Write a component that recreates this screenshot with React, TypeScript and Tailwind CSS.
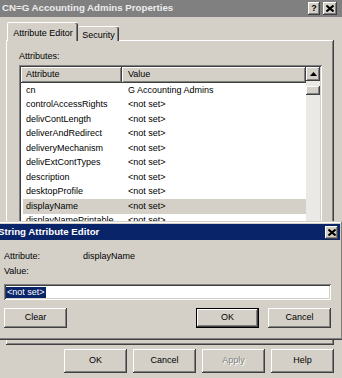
const raised =
  "shadow-[inset_-1px_-1px_#404040,inset_1px_1px_#ffffff,inset_-2px_-2px_#808080,inset_2px_2px_#d4d0c8]";
const sunken =
  "shadow-[inset_1px_1px_#808080,inset_-1px_-1px_#ffffff,inset_2px_2px_#404040,inset_-2px_-2px_#d4d0c8]";

const rows: [string, string][] = [
  ["cn", "G Accounting Admins"],
  ["controlAccessRights", "<not set>"],
  ["delivContLength", "<not set>"],
  ["deliverAndRedirect", "<not set>"],
  ["deliveryMechanism", "<not set>"],
  ["delivExtContTypes", "<not set>"],
  ["description", "<not set>"],
  ["desktopProfile", "<not set>"],
  ["displayName", "<not set>"],
  ["displayNamePrintable", "<not set>"],
  ["distinguishedName", "CN=G Accounting Admins,OU=Groups"],
  ["dLMemDefault", "<not set>"],
  ["dLMemRejectPerms", "<not set>"],
  ["dLMemSubmitPerms", "<not set>"],
  ["dSASignature", "<not set>"],
  ["dSCorePropagationData", "<not set>"],
  ["extensionAttribute1", "<not set>"],
  ["extensionAttribute10", "<not set>"],
];

function CloseGlyph() {
  return (
    <svg width="8" height="7" viewBox="0 0 8 7">
      <path d="M0.5 0.5 L7.5 6.5 M7.5 0.5 L0.5 6.5" stroke="#000" strokeWidth="2" />
    </svg>
  );
}

function CaptionButton({ children, w }: { children: React.ReactNode; w: string }) {
  return (
    <div className={`flex h-[13px] ${w} items-center justify-center bg-[#d4d0c8] ${raised}`}>
      {children}
    </div>
  );
}

function Button({
  label,
  h = "h-[24px]",
  isDefault = false,
  disabled = false,
}: {
  label: string;
  h?: string;
  isDefault?: boolean;
  disabled?: boolean;
}) {
  return (
    <div
      className={`flex w-[63px] ${h} items-center justify-center bg-[#d4d0c8] ${
        isDefault
          ? "shadow-[inset_0_0_0_1px_#000000,inset_-2px_-2px_#404040,inset_2px_2px_#ffffff,inset_-3px_-3px_#808080]"
          : raised
      } ${disabled ? "text-[#808080] [text-shadow:1px_1px_#ffffff]" : "text-black"}`}
    >
      {label}
    </div>
  );
}

export default function App() {
  return (
    <div className="relative h-[378px] w-[342px] overflow-hidden bg-[#d4d0c8] font-['Liberation_Sans',Arial,sans-serif] text-[9px] text-black">
      {/* Properties window */}
      <div className="flex h-[17px] items-center justify-between bg-[#808080] pl-[2px] pr-[5px]">
        <span className="text-[9.7px] font-bold text-[#ececec]">CN=G Accounting Admins Properties</span>
        <div className="flex gap-[3px]">
          <CaptionButton w="w-[12px]">
            <span className="text-[9px] font-bold leading-none">?</span>
          </CaptionButton>
          <CaptionButton w="w-[14px]">
            <CloseGlyph />
          </CaptionButton>
        </div>
      </div>

      <div className="relative z-10 -mb-px mt-[5px] flex items-end pl-[7px]">
        <div className="flex h-[19px] w-[71px] items-start justify-center rounded-t-[2px] border-l border-t border-white bg-[#d4d0c8] pt-[4px] shadow-[inset_-1px_0_#404040,inset_-2px_0_#808080]">
          Attribute Editor
        </div>
        <div className="flex h-[15px] w-[41px] items-start justify-center rounded-t-[2px] border-t border-white bg-[#d4d0c8] pt-[2px] shadow-[inset_-1px_0_#404040,inset_-2px_0_#808080]">
          Security
        </div>
      </div>

      <div className={`ml-[6px] flex h-[305px] w-[328px] flex-col px-[13px] pt-[11px] ${raised}`}>
        <div className="h-[11px] leading-[11px]">Attributes:</div>
        <div className={`mt-[3px] flex h-[265px] w-[303px] bg-white p-[2px] ${sunken}`}>
          <div className="flex-1">
            <div className="flex h-[16px]">
              <div className={`flex w-[101px] items-center bg-[#d4d0c8] pl-[5px] ${raised}`}>Attribute</div>
              <div className={`flex flex-1 items-center bg-[#d4d0c8] pl-[6px] ${raised}`}>Value</div>
            </div>
            {rows.map(([name, value], i) => (
              <div
                key={name}
                className={`ml-[2px] flex h-[14.5px] items-center ${i === 8 ? "bg-[#d4d0c8]" : ""}`}
              >
                <div className="w-[99px] pl-[3px]">{name}</div>
                <div className="pl-[6px]">{value}</div>
              </div>
            ))}
          </div>
          <div className="flex w-[14px] flex-col bg-[#ebe9e5]">
            <div className={`flex h-[14px] items-center justify-center bg-[#d4d0c8] ${raised}`}>
              <svg width="7" height="4" viewBox="0 0 7 4">
                <path d="M3.5 0 L7 4 L0 4 Z" fill="#000" />
              </svg>
            </div>
            <div className={`mt-[5px] h-[9px] bg-[#d4d0c8] ${raised}`} />
          </div>
        </div>
      </div>

      <div className="mt-[4px] flex justify-end gap-[6px] pr-[8px]">
        <Button label="OK" />
        <Button label="Cancel" />
        <Button label="Apply" disabled />
        <Button label="Help" />
      </div>

      {/* String Attribute Editor window */}
      <div className="absolute left-[-6px] top-[221px] flex h-[119px] w-[349px] flex-col bg-[#d4d0c8] p-[3px] shadow-[inset_-1px_-1px_#404040,inset_1px_1px_#d4d0c8,inset_-2px_-2px_#808080,inset_2px_2px_#ffffff]">
        <div className="flex h-[16px] items-center justify-between bg-[#0a246a] pl-[1px] pr-[2px]">
          <span className="text-[9.7px] font-bold text-white">String Attribute Editor</span>
          <CaptionButton w="w-[13px]">
            <CloseGlyph />
          </CaptionButton>
        </div>
        <div className="flex flex-col pl-[7px] pr-[9px] pt-[11px]">
          <div className="flex h-[12px] items-center">
            <div className="w-[79px]">Attribute:</div>
            <div>displayName</div>
          </div>
          <div className="mt-[3px] flex h-[12px] items-center">Value:</div>
          <div className={`mt-[6px] flex h-[16px] items-center bg-white pl-[2px] ${sunken}`}>
            <span className="bg-[#0a246a] px-px leading-[11px] text-white">&lt;not set&gt;</span>
          </div>
          <div className="mt-[8px] flex justify-between">
            <Button label="Clear" h="h-[20px]" />
            <div className="flex gap-[9px]">
              <Button label="OK" h="h-[20px]" isDefault />
              <Button label="Cancel" h="h-[20px]" />
            </div>
          </div>
        </div>
      </div>
    </div>
  );
}
